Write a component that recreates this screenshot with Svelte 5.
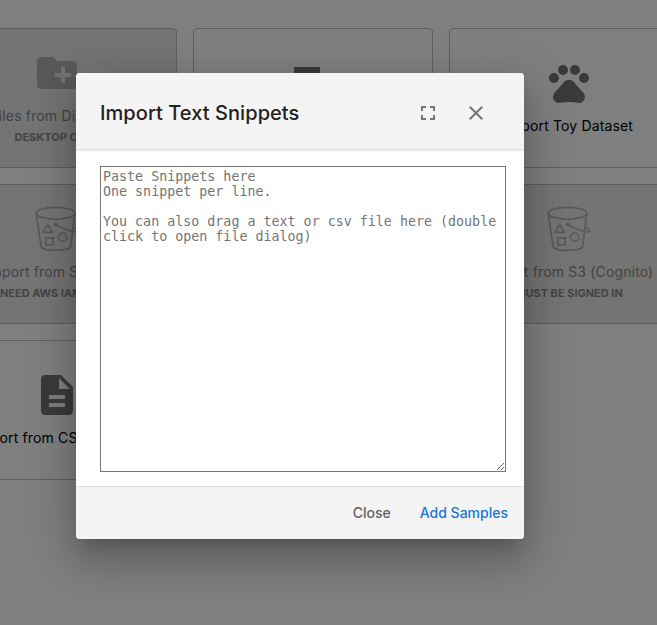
<script>
  const cards = [
    { icon: 'folder', label: 'Files from Directory', note: 'DESKTOP ONLY', disabled: true },
    { icon: 'clipboard', label: 'Import from Clipboard' },
    { icon: 'paw', label: 'Import Toy Dataset' },
    { icon: 'bucket', label: 'Import from S3 (IAM)', note: 'NEED AWS IAM USER', disabled: true },
    { icon: 'bucket', label: 'Import from S3', note: 'DESKTOP ONLY', disabled: true },
    { icon: 'bucket', label: 'Import from S3 (Cognito)', note: 'MUST BE SIGNED IN', disabled: true },
    { icon: 'file', label: 'Import from CSV / JSON' },
    { icon: 'file', label: 'Import Text Snippets' }
  ];
  const placeholder =
    'Paste Snippets here\nOne snippet per line.\n\nYou can also drag a text or csv file here (double click to open file dialog)';
  let text = $state('');
</script>

<div class="page">
  <div class="cards">
    {#each cards as card}
      <div class="card" class:disabled={card.disabled}>
        {#if card.icon === 'bucket'}
          <svg class="icon" viewBox="0 0 48 48" fill="none" stroke="currentColor" stroke-width="1.7" stroke-linejoin="round" stroke-linecap="round">
            <ellipse cx="22.5" cy="8.2" rx="19.2" ry="5.9" />
            <path d="M3.3 8.6 8 41.2c.5 5.6 29 5.6 29.7 0L41.7 8.6" />
            <path d="M14.7 19.5 10 27.3h9.6z" />
            <path d="M12.8 32.8h7.4v7.2h-7.4z" />
            <circle cx="29.6" cy="32.2" r="4.1" />
            <circle cx="22.7" cy="19.7" r="1.3" fill="currentColor" />
            <path d="M22.7 19.7c7 3.7 14 6.3 20 7.2 3.3.3 2.200-2.3-1.5-4.3" />
          </svg>
        {:else}
          <svg class="icon" viewBox="0 0 24 24" fill="currentColor">
            {#if card.icon === 'folder'}
              <path d="M20 6h-8l-2-2H4c-1.11 0-1.99.89-1.99 2L2 18c0 1.11.89 2 2 2h16c1.11 0 2-.89 2-2V8c0-1.11-.89-2-2-2zm-1 8h-3v3h-2v-3h-3v-2h3V9h2v3h3v2z" />
            {:else if card.icon === 'paw'}
              <circle cx="4.5" cy="9.5" r="2.5" />
              <circle cx="9" cy="5.5" r="2.5" />
              <circle cx="15" cy="5.5" r="2.5" />
              <circle cx="19.5" cy="9.5" r="2.5" />
              <path d="M17.34 14.86c-.87-1.02-1.6-1.89-2.48-2.91-.46-.54-1.05-1.08-1.75-1.32-.11-.04-.22-.07-.33-.09-.25-.04-.52-.04-.78-.04s-.53 0-.79.05c-.11.02-.22.05-.33.09-.7.24-1.28.78-1.75 1.32-.87 1.02-1.6 1.89-2.48 2.91-1.31 1.31-2.92 2.76-2.62 4.79.29 1.02 1.02 2.03 2.33 2.32.73.15 3.06-.44 5.54-.44h.18c2.48 0 4.81.58 5.54.44 1.31-.29 2.04-1.31 2.33-2.32.31-2.04-1.3-3.49-2.61-4.8z" />
            {:else if card.icon === 'clipboard'}
              <path d="M2.500 4h13v3.500h-5v12h-3v-12h-5z" />
            {:else}
              <path d="M14 2H6c-1.100 0-1.990.900-1.990 2L4 20c0 1.100.890 2 1.990 2H18c1.100 0 2-.900 2-2V8l-6-6zm2 16H8v-2h8v2zm0-4H8v-2h8v2zm-3-5V3.500L18.500 9H13z" />
            {/if}
          </svg>
        {/if}
        <div class="label">{card.label}</div>
        {#if card.note}<div class="note">{card.note}</div>{/if}
      </div>
    {/each}
  </div>

  <div class="backdrop">
    <div class="dialog" role="dialog" aria-label="Import Text Snippets">
      <header>
        <h2>Import Text Snippets</h2>
        <button class="tool" aria-label="Full screen">
          <svg viewBox="0 0 24 24"><path d="M7 14H5v5h5v-2H7v-3zm-2-4h2V7h3V5H5v5zm12 7h-3v2h5v-5h-2v3zM14 5v2h3v3h2V5h-5z" /></svg>
        </button>
        <button class="tool" aria-label="Close dialog">
          <svg viewBox="0 0 24 24"><path d="M19 6.410 17.590 5 12 10.590 6.410 5 5 6.410 10.590 12 5 17.590 6.410 19 12 13.410 17.590 19 19 17.590 13.410 12z" /></svg>
        </button>
      </header>
      <main>
        <textarea {placeholder} bind:value={text}></textarea>
      </main>
      <footer>
        <button class="action">Close</button>
        <button class="action primary">Add Samples</button>
      </footer>
    </div>
  </div>
</div>

<style>
  :global(body) { margin: 0; background: #fff; }
  .page {
    position: relative;
    height: 625px;
    overflow: hidden;
    font-family: Inter, "Liberation Sans", sans-serif;
  }
  .cards {
    display: grid;
    grid-template-columns: repeat(3, 240px);
    grid-auto-rows: 140px;
    gap: 16px;
    margin-left: -63px;
    padding-top: 28px;
  }
  .card {
    box-sizing: border-box;
    display: flex;
    flex-direction: column;
    align-items: center;
    justify-content: center;
    border: 1px solid #bdbdbd;
    border-radius: 4px;
    color: #000;
  }
  .disabled { background: #e8e8e8; color: #888; }
  .icon { width: 48px; height: 48px; color: #757575; }
  .disabled .icon { color: #b2b2b2; }
  .label {
    margin-top: 9px;
    padding-bottom: 1px;
    font-size: 14px;
    line-height: 20px;
    font-weight: 400;
    letter-spacing: 0.15px;
    white-space: nowrap;
  }
  .note {
    font-size: 11px;
    line-height: 20px;
    font-weight: 700;
    white-space: nowrap;
    color: #888;
  }
  .backdrop {
    position: absolute;
    inset: 0;
    display: flex;
    justify-content: center;
    align-items: flex-start;
    padding: 73px 57px 0 0;
    background: rgba(0, 0, 0, 0.5);
  }
  .dialog {
    display: flex;
    flex-direction: column;
    width: 448px;
    height: 466px;
    overflow: hidden;
    border-radius: 4px;
    background: #fff;
    box-shadow:
      0 11px 15px -7px rgba(0, 0, 0, 0.2),
      0 24px 38px 3px rgba(0, 0, 0, 0.14),
      0 9px 46px 8px rgba(0, 0, 0, 0.12);
  }
  header {
    box-sizing: border-box;
    display: flex;
    align-items: center;
    height: 77px;
    padding: 4px 24px 0;
    border-bottom: 1px solid #dedede;
    background: #f4f4f4;
    box-shadow: 0 1px 3px rgba(0, 0, 0, 0.09);
  }
  h2 {
    flex: 1;
    margin: 0;
    font-size: 20px;
    font-weight: 500;
    letter-spacing: 0.06px;
    line-height: 32px;
    color: #212121;
  }
  button { border: 0; background: none; font-family: inherit; }
  .tool {
    display: flex;
    justify-content: center;
    align-items: center;
    width: 48px;
    height: 48px;
    padding: 0;
  }
  .tool svg { width: 24px; height: 24px; fill: #757575; }
  main { flex: 1; display: flex; padding: 16px 18px 14px 24px; }
  textarea {
    box-sizing: border-box;
    flex: 1;
    margin: 0;
    padding: 2px;
    border: 1px solid #767676;
    border-radius: 0;
    font-family: "DejaVu Sans Mono", monospace;
    font-size: 13.333px;
    line-height: 15px;
    resize: both;
  }
  textarea::placeholder { color: #757575; }
  footer {
    box-sizing: border-box;
    display: flex;
    justify-content: flex-end;
    align-items: center;
    gap: 13px;
    height: 53px;
    padding: 0 8px 2px;
    border-top: 1px solid #dedede;
    background: #f4f4f4;
  }
  .action {
    padding: 0 8px;
    height: 36px;
    font-size: 14px;
    font-weight: 500;
    color: #616161;
  }
  .primary { color: #1976d2; }
</style>
